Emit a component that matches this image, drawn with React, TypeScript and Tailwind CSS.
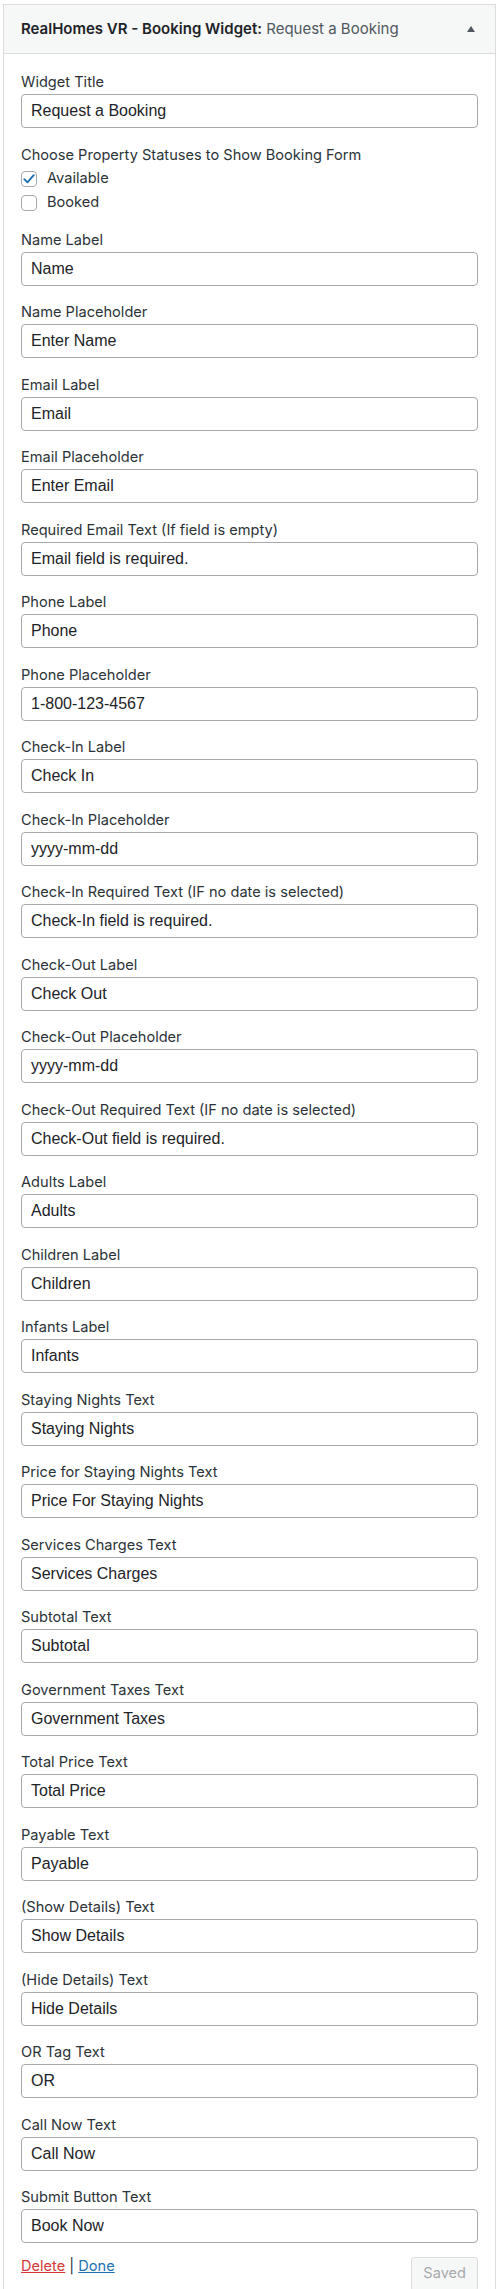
import React from "react";

const fields: { label: string; value: string }[] = [
  { label: "Name Label", value: "Name" },
  { label: "Name Placeholder", value: "Enter Name" },
  { label: "Email Label", value: "Email" },
  { label: "Email Placeholder", value: "Enter Email" },
  { label: "Required Email Text (If field is empty)", value: "Email field is required." },
  { label: "Phone Label", value: "Phone" },
  { label: "Phone Placeholder", value: "1-800-123-4567" },
  { label: "Check-In Label", value: "Check In" },
  { label: "Check-In Placeholder", value: "yyyy-mm-dd" },
  { label: "Check-In Required Text (IF no date is selected)", value: "Check-In field is required." },
  { label: "Check-Out Label", value: "Check Out" },
  { label: "Check-Out Placeholder", value: "yyyy-mm-dd" },
  { label: "Check-Out Required Text (IF no date is selected)", value: "Check-Out field is required." },
  { label: "Adults Label", value: "Adults" },
  { label: "Children Label", value: "Children" },
  { label: "Infants Label", value: "Infants" },
  { label: "Staying Nights Text", value: "Staying Nights" },
  { label: "Price for Staying Nights Text", value: "Price For Staying Nights" },
  { label: "Services Charges Text", value: "Services Charges" },
  { label: "Subtotal Text", value: "Subtotal" },
  { label: "Government Taxes Text", value: "Government Taxes" },
  { label: "Total Price Text", value: "Total Price" },
  { label: "Payable Text", value: "Payable" },
  { label: "(Show Details) Text", value: "Show Details" },
  { label: "(Hide Details) Text", value: "Hide Details" },
  { label: "OR Tag Text", value: "OR" },
  { label: "Call Now Text", value: "Call Now" },
  { label: "Submit Button Text", value: "Book Now" },
];

function TextField({ label, value }: { label: string; value: string }) {
  return (
    <div>
      <label className="block text-[14.6px] leading-[21px] text-[#2c3338]">{label}</label>
      <input
        type="text"
        readOnly
        value={value}
        className="mt-[1px] block h-[34px] w-full rounded-[4px] border border-[#a7aaad] bg-white px-[9px] font-['Liberation_Sans',Arial,sans-serif] text-[16px] text-[#1d2327] outline-none"
      />
    </div>
  );
}

function Checkbox({ label, checked }: { label: string; checked?: boolean }) {
  return (
    <div className="flex h-6 items-center gap-[10px]">
      <span className="flex h-4 w-4 items-center justify-center rounded-[4px] border border-[#a7aaad] bg-white">
        {checked && (
          <svg viewBox="0 0 16 16" className="h-4 w-4">
            <path d="M2.6 8.2 L6.2 11.8 L13.4 3.6" fill="none" stroke="#2271b1" strokeWidth="2.2" strokeLinecap="round" strokeLinejoin="round" />
          </svg>
        )}
      </span>
      <span className="text-[14.6px] leading-[21px] text-[#2c3338]">{label}</span>
    </div>
  );
}

export default function App() {
  return (
    <div className="min-h-screen bg-white pt-[4px] pl-[3px] pr-[4px] font-['Inter','Noto_Sans',sans-serif]">
      <div className="border border-[#dcdcde] bg-white">
        <div className="flex h-[49px] items-center justify-between border-b border-[#dcdcde] bg-[#f6f7f7] pl-[17px] pr-[20px]">
          <h3 className="text-[15px] text-[#1d2327]">
            <span className="font-semibold">RealHomes VR - Booking Widget:</span>{" "}
            <span className="text-[#50575e]">Request a Booking</span>
          </h3>
          <svg viewBox="0 0 8 6" className="h-[6px] w-[8px]">
            <path d="M4 0 L8 6 L0 6 Z" fill="#50575e" />
          </svg>
        </div>

        <div className="px-[17px] pt-[18.2px] pb-[20px]">
          <div className="mb-[16.5px]">
            <TextField label="Widget Title" value="Request a Booking" />
          </div>

          <div className="mb-[15.1px]">
            <p className="text-[14.6px] leading-[21px] text-[#2c3338]">Choose Property Statuses to Show Booking Form</p>
            <div className="mt-[1px]">
              <Checkbox label="Available" checked />
              <Checkbox label="Booked" />
            </div>
          </div>

          <div className="flex flex-col gap-[16.5px]">
            {fields.map((f, i) => (
              <TextField key={i} label={f.label} value={f.value} />
            ))}
          </div>

          <div className="mt-[12.8px] flex items-start justify-between">
            <div className="text-[14.6px] leading-[21px] text-[#2c3338]">
              <a href="#" className="text-[#d63638] underline">Delete</a>
              <span> | </span>
              <a href="#" className="text-[#2271b1] underline">Done</a>
            </div>
            <button
              disabled
              className="mt-[0.6px] h-[34px] rounded-[3px] border border-[#dcdcde] bg-[#f6f7f7] px-[11px] text-[14.6px] text-[#a7aaad]"
            >
              Saved
            </button>
          </div>
        </div>
      </div>
    </div>
  );
}
